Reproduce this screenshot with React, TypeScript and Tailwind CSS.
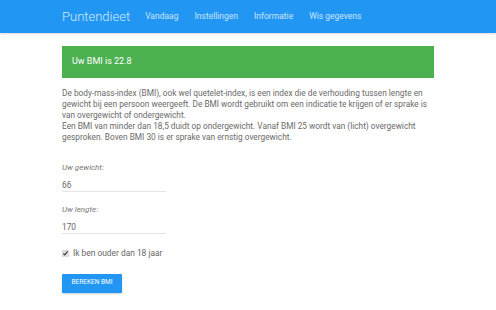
import { useState } from "react";

const NAV_LINKS = ["Vandaag", "Instellingen", "Informatie", "Wis gegevens"];

export default function App() {
  const [weight, setWeight] = useState("66");
  const [height, setHeight] = useState("170");
  const [adult, setAdult] = useState(true);

  return (
    <div className="min-h-[310px] bg-white font-['Roboto',sans-serif] text-[#666]">
      {/* Navbar */}
      <nav className="h-[33px] bg-[#2196f3] shadow-[0_1px_2px_rgba(0,0,0,0.15)]">
        <div className="flex items-center h-full pl-[62px]">
          <span className="text-[13px] font-light text-[#d4eafd] mr-[15px] leading-none">Puntendieet</span>
          <div className="flex gap-[16px]">
            {NAV_LINKS.map(l => (
              <a key={l} className="text-[8.5px] text-[#cbe5fc] leading-none">{l}</a>
            ))}
          </div>
        </div>
      </nav>

      <main className="w-[372px] ml-[62px] pt-[13px]">
        {/* Resultaat */}
        <div className="h-[32px] bg-[#4caf50] flex items-center px-[10px] text-white text-[9px]">
          Uw BMI is 22.8
        </div>

        <p className="mt-[10px] text-[8.3px] leading-[11px] text-[#6a6a6a]">
          De body-mass-index (BMI), ook wel quetelet-index, is een index die de verhouding tussen lengte en
          gewicht bij een persoon weergeeft. De BMI wordt gebruikt om een indicatie te krijgen of er sprake is
          van overgewicht of ondergewicht.
          <br />
          Een BMI van minder dan 18,5 duidt op ondergewicht. Vanaf BMI 25 wordt van (licht) overgewicht
          gesproken. Boven BMI 30 is er sprake van ernstig overgewicht.
        </p>

        <div className="mt-[20px] w-[104px]">
          <label className="block italic text-[8px] text-[#777] leading-[10px]">Uw gewicht:</label>
          <input
            value={weight}
            onChange={e => setWeight(e.target.value)}
            className="block w-full mt-[5px] h-[14px] text-[8.3px] text-[#666] border-b border-[#e5e5e5] outline-none"
          />
        </div>

        <div className="mt-[13px] w-[104px]">
          <label className="block italic text-[8px] text-[#777] leading-[10px]">Uw lengte:</label>
          <input
            value={height}
            onChange={e => setHeight(e.target.value)}
            className="block w-full mt-[5px] h-[14px] text-[8.3px] text-[#666] border-b border-[#e5e5e5] outline-none"
          />
        </div>

        <label className="flex items-center gap-[4px] mt-[13px] text-[8.4px] text-[#666]">
          <input
            type="checkbox"
            checked={adult}
            onChange={e => setAdult(e.target.checked)}
            className="w-[7px] h-[7px] m-0 accent-[#e0e0e0]"
          />
          Ik ben ouder dan 18 jaar
        </label>

        <button className="mt-[14px] w-[60px] h-[19px] bg-[#2196f3] text-white text-[6.5px] uppercase rounded-[1px] shadow-[0_1px_2px_rgba(0,0,0,0.2)]">
          Bereken BMI
        </button>
      </main>
    </div>
  );
}
